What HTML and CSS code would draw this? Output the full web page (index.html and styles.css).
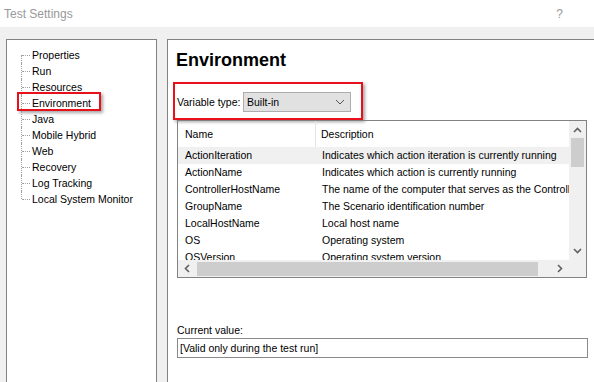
FILE: index.html
```html
<!DOCTYPE html>
<html lang="en">
<head>
  <meta charset="UTF-8">
  <meta name="viewport" content="width=device-width, initial-scale=1.0">
  <title>Test Settings</title>
  <link rel="stylesheet" href="styles.css">
</head>
<body>
  <div class="titlebar">
    <span class="title">Test Settings</span>
    <span class="help">?</span>
  </div>

  <div class="main">
    <div class="tree-panel">
      <ul class="tree">
        <li>Properties</li>
        <li>Run</li>
        <li>Resources</li>
        <li>Environment<span class="callout"></span></li>
        <li>Java</li>
        <li>Mobile Hybrid</li>
        <li>Web</li>
        <li>Recovery</li>
        <li>Log Tracking</li>
        <li>Local System Monitor</li>
      </ul>
    </div>

    <div class="content">
      <h1>Environment</h1>

      <div class="var-row">
        <span class="var-label">Variable type:</span>
        <div class="select">
          <span>Built-in</span>
          <svg width="10" height="6" viewBox="0 0 10 6"><polyline points="1,1 5,5 9,1" fill="none" stroke="#555" stroke-width="1"/></svg>
        </div>
      </div>

      <div class="listview">
        <div class="lv-main">
          <div class="lv-rows">
            <div class="lv-head">
              <div class="col-name">Name</div>
              <div class="col-desc">Description</div>
            </div>
            <div class="lv-row hot">
              <div class="col-name">ActionIteration</div>
              <div class="col-desc">Indicates which action iteration is currently running</div>
            </div>
            <div class="lv-row">
              <div class="col-name">ActionName</div>
              <div class="col-desc">Indicates which action is currently running</div>
            </div>
            <div class="lv-row">
              <div class="col-name">ControllerHostName</div>
              <div class="col-desc">The name of the computer that serves as the Controller</div>
            </div>
            <div class="lv-row">
              <div class="col-name">GroupName</div>
              <div class="col-desc">The Scenario identification number</div>
            </div>
            <div class="lv-row">
              <div class="col-name">LocalHostName</div>
              <div class="col-desc">Local host name</div>
            </div>
            <div class="lv-row">
              <div class="col-name">OS</div>
              <div class="col-desc">Operating system</div>
            </div>
            <div class="lv-row">
              <div class="col-name">OSVersion</div>
              <div class="col-desc">Operating system version</div>
            </div>
          </div>
          <div class="vscroll">
            <svg class="arrow" width="9" height="6" viewBox="0 0 9 6"><polyline points="1,5 4.5,1.5 8,5" fill="none" stroke="#606060" stroke-width="1.6"/></svg>
            <div class="vthumb"></div>
            <div class="spacer"></div>
            <svg class="arrow" width="9" height="6" viewBox="0 0 9 6"><polyline points="1,1 4.5,4.5 8,1" fill="none" stroke="#606060" stroke-width="1.6"/></svg>
          </div>
        </div>
        <div class="lv-bottom">
          <div class="hscroll">
            <svg class="arrow" width="6" height="9" viewBox="0 0 6 9"><polyline points="5,1 1.5,4.5 5,8" fill="none" stroke="#606060" stroke-width="1.6"/></svg>
            <div class="hthumb"></div>
            <svg class="arrow" width="6" height="9" viewBox="0 0 6 9"><polyline points="1,1 4.5,4.5 1,8" fill="none" stroke="#606060" stroke-width="1.6"/></svg>
          </div>
          <div class="corner"></div>
        </div>
      </div>

      <div class="current">
        <div class="current-label">Current value:</div>
        <div class="textbox">[Valid only during the test run]</div>
      </div>
    </div>
  </div>
</body>
</html>
```

FILE: styles.css
```css
body {
  margin: 0;
  height: 382px;
  overflow: hidden;
  background-color: #f0f0f0;
  font-family: "Liberation Sans", Arial, sans-serif;
  font-size: 10.5px;
  color: #000;
}
.titlebar {
  height: 27px;
  background-color: #fff;
  display: flex;
  align-items: center;
  justify-content: space-between;
  padding: 0 31px 0 4px;
  font-size: 12px;
  color: #999;
}
.main {
  display: flex;
  gap: 10px;
  padding: 12px 0 0 6px;
}
.tree-panel {
  width: 151px;
  height: 343px;
  box-sizing: border-box;
  flex: none;
  background-color: #fff;
  border: 1px solid #828282;
  border-bottom: none;
  padding-top: 7px;
}
.tree {
  list-style: none;
  margin: 0 0 0 14px;
  padding: 0;
}
.tree li {
  position: relative;
  height: 16px;
  line-height: 16px;
  padding-left: 11px;
  white-space: nowrap;
}
.tree li::before {
  content: "";
  position: absolute;
  left: 0;
  top: 0;
  bottom: 0;
  border-left: 1px dotted #a0a0a0;
}
.tree li:first-child::before {
  top: 8px;
}
.tree li:last-child::before {
  bottom: 8px;
}
.tree li::after {
  content: "";
  position: absolute;
  left: 1px;
  top: 8px;
  width: 8px;
  border-top: 1px dotted #a0a0a0;
}
.callout {
  position: absolute;
  left: -4px;
  top: -3px;
  width: 84px;
  height: 19px;
  box-sizing: border-box;
  border: 2px solid #e8101a;
  box-shadow: 2px 2px 3px rgba(0, 0, 0, 0.35);
}
.content {
  flex: 1;
  height: 343px;
  margin-right: -10px;
  background-color: #fff;
  border-top: 1px solid #828282;
  border-left: 1px solid #828282;
  padding: 9px 0 0 9px;
}
h1 {
  margin: 0 0 11px -1px;
  font-size: 18px;
  line-height: 22px;
  font-weight: bold;
}
.var-row {
  width: 190px;
  height: 38px;
  box-sizing: border-box;
  margin-left: -4px;
  border: 2px solid #e8101a;
  box-shadow: 2px 2px 3px rgba(0, 0, 0, 0.35);
  display: flex;
  align-items: center;
  padding: 2px 0 0 2px;
}
.var-label {
  width: 66px;
  flex: none;
  white-space: nowrap;
}
.select {
  width: 108px;
  height: 20px;
  box-sizing: border-box;
  background-color: #e1e1e1;
  border: 1px solid #adadad;
  display: flex;
  align-items: center;
  justify-content: space-between;
  padding: 0 5px 0 3px;
}
.listview {
  width: 410px;
  height: 158px;
  box-sizing: border-box;
  border: 1px solid #828282;
  display: flex;
  flex-direction: column;
}
.lv-main {
  display: flex;
  height: 139px;
}
.lv-rows {
  flex: 1;
  overflow: hidden;
}
.lv-head,
.lv-row {
  display: flex;
  white-space: nowrap;
}
.lv-head {
  height: 26px;
  line-height: 26px;
}
.lv-head .col-name {
  border-right: 1px solid #e5e5e5;
}
.lv-row {
  height: 17px;
  line-height: 17px;
}
.lv-row.hot {
  background-color: #f0f0f0;
}
.col-name {
  width: 138px;
  flex: none;
  box-sizing: border-box;
  padding-left: 7px;
}
.col-desc {
  padding-left: 6px;
}
.lv-head .col-desc {
  padding-left: 5px;
}
.vscroll {
  width: 17px;
  flex: none;
  background-color: #f0f0f0;
  display: flex;
  flex-direction: column;
  align-items: center;
}
.vscroll .arrow {
  margin: 6px 0;
}
.vthumb {
  width: 13px;
  height: 29px;
  margin-top: -1px;
  background-color: #cdcdcd;
}
.spacer {
  flex: 1;
}
.lv-bottom {
  display: flex;
  height: 17px;
}
.hscroll {
  flex: 1;
  background-color: #f0f0f0;
  display: flex;
  align-items: center;
  padding: 0 6px;
}
.hthumb {
  width: 341px;
  height: 14px;
  margin: 0 auto 0 7px;
  background-color: #cdcdcd;
}
.corner {
  width: 17px;
  background-color: #f0f0f0;
}
.current {
  margin-top: 46px;
}
.current-label {
  line-height: 13px;
}
.textbox {
  width: 411px;
  height: 20px;
  box-sizing: border-box;
  margin-top: 1px;
  border: 1px solid #8a8a8a;
  line-height: 18px;
  padding-left: 2px;
}
```
